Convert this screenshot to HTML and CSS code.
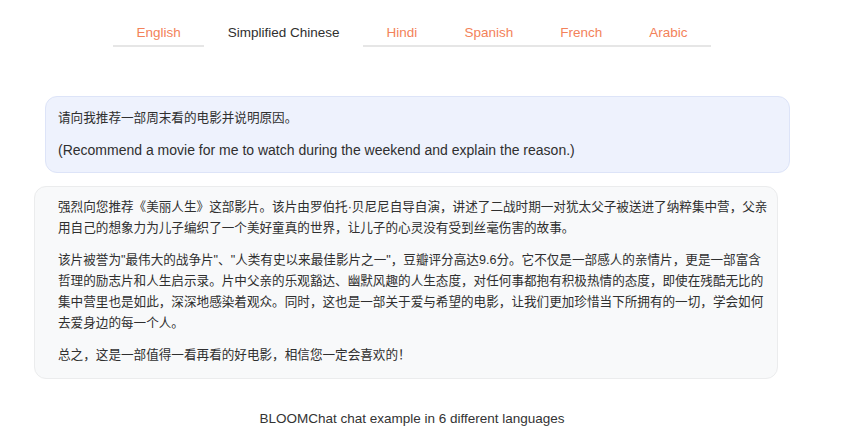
FILE: index.html
```html
<!DOCTYPE html>
<html lang="zh">
<head>
    <meta charset="UTF-8">
    <meta name="viewport" content="width=device-width, initial-scale=1.0">
    <title>BLOOMChat</title>
    <link rel="stylesheet" href="styles.css">
</head>
<body>
    <div class="page">
        <div class="tabs">
            <span class="tab">English</span>
            <span class="tab active">Simplified Chinese</span>
            <span class="tab">Hindi</span>
            <span class="tab">Spanish</span>
            <span class="tab">French</span>
            <span class="tab">Arabic</span>
        </div>

        <div class="chat">
            <div class="bubble user">
                <p>请向我推荐一部周末看的电影并说明原因。</p>
                <p class="en">(Recommend a movie for me to watch during the weekend and explain the reason.)</p>
            </div>
            <div class="bubble bot">
                <p>强烈向您推荐《美丽人生》这部影片。该片由罗伯托·贝尼尼自导自演，讲述了二战时期一对犹太父子被送进了纳粹集中营，父亲用自己的想象力为儿子编织了一个美好童真的世界，让儿子的心灵没有受到丝毫伤害的故事。</p>
                <p>该片被誉为"最伟大的战争片"、"人类有史以来最佳影片之一"，豆瓣评分高达9.6分。它不仅是一部感人的亲情片，更是一部富含哲理的励志片和人生启示录。片中父亲的乐观豁达、幽默风趣的人生态度，对任何事都抱有积极热情的态度，即使在残酷无比的集中营里也是如此，深深地感染着观众。同时，这也是一部关于爱与希望的电影，让我们更加珍惜当下所拥有的一切，学会如何去爱身边的每一个人。</p>
                <p>总之，这是一部值得一看再看的好电影，相信您一定会喜欢的！</p>
            </div>
        </div>

        <div class="caption">BLOOMChat chat example in 6 different languages</div>
    </div>
</body>
</html>
```

FILE: styles.css
```css
body {
    margin: 0;
    background: #fff;
    color: #2f2f2f;
    font-family: "Liberation Sans", "Noto Sans CJK SC", sans-serif;
}
.page {
    width: 756px;
    padding-left: 34px;
}
.tabs {
    display: flex;
    justify-content: center;
}
.tab {
    padding: 23px 23.5px 2px;
    line-height: 20px;
    font-size: 13.5px;
    color: #f3825a;
    border-bottom: 2px solid #e6e6e6;
}
.tab.active {
    color: #2f2f2f;
    border-bottom-color: transparent;
}
.chat {
    margin-top: 49px;
    display: flex;
    flex-direction: column;
    gap: 13px;
}
.bubble {
    border-radius: 12px;
    font-size: 12.6px;
    line-height: 21px;
}
.bubble p {
    margin: 0 0 11px;
}
.bubble p:last-child {
    margin-bottom: 0;
}
.user {
    margin-left: 11px;
    padding: 11px 12px 11px 12px;
    background: #eef2fd;
    border: 1px solid #dde4f8;
}
.user .en {
    font-size: 14px;
}
.bot {
    margin-right: 12px;
    padding: 10px 4px 12px 23px;
    background: #f8f9fa;
    border: 1px solid #ebeced;
}
.caption {
    margin-top: 30px;
    text-align: center;
    font-size: 13.5px;
    line-height: 20px;
    color: #333;
}
```
